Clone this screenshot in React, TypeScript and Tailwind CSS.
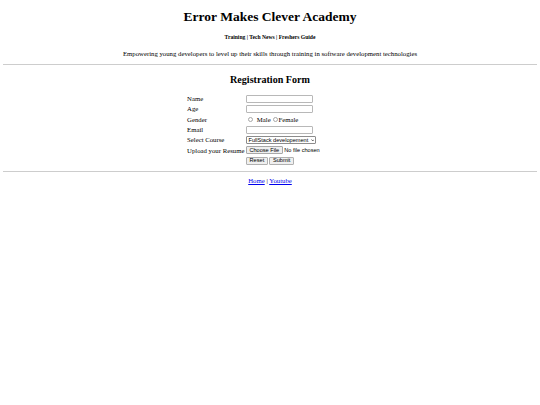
import { useState } from "react";

const serif = "font-['Liberation_Serif','Times_New_Roman',serif]";
const sans = "font-['Liberation_Sans',Arial,sans-serif]";

function Row({ label, children }: { label: string; children: React.ReactNode }) {
  return (
    <>
      <div className="flex h-[10.3px] items-center whitespace-nowrap">{label}</div>
      <div className="flex h-[10.3px] items-center">{children}</div>
    </>
  );
}

export default function App() {
  const [gender, setGender] = useState("");

  return (
    <div className={`min-h-[405px] bg-white px-[3.4px] text-black ${serif}`}>
      <h1 className="pt-[9px] text-center text-[13.5px] font-bold leading-[15.5px]">
        Error Makes Clever Academy
      </h1>
      <h5 className="mt-[9.4px] text-center text-[5.6px] font-bold leading-[6.4px]">
        Training | Tech News | Freshers Guide
      </h5>
      <p className="mt-[9.4px] text-center text-[6.75px] leading-[7.8px]">
        Empowering young developers to level up their skills through training in software development technologies
      </p>
      <hr className="mt-[6.75px] h-px border-0 bg-[#cdcdcd]" />

      <h2 className="mt-[8.4px] text-center text-[10.1px] font-bold leading-[11.6px]">
        Registration Form
      </h2>

      <form
        className="mx-auto mt-[8.6px] grid w-fit grid-cols-[auto_auto] gap-x-[1.6px] text-[6.75px] leading-[7.8px]"
        onSubmit={(e) => e.preventDefault()}
      >
        <Row label="Name">
          <input type="text" className="h-[8.4px] w-[67px] rounded-[1px] border border-[#b8b8b8] bg-white" />
        </Row>
        <Row label="Age">
          <input type="text" className="h-[8.4px] w-[67px] rounded-[1px] border border-[#b8b8b8] bg-white" />
        </Row>
        <Row label="Gender">
          <label className="flex items-center">
            <input
              type="radio"
              name="gender"
              checked={gender === "male"}
              onChange={() => setGender("male")}
              className="ml-[2px] mr-[3.6px] h-[5.2px] w-[5.2px] appearance-none rounded-full border border-[#a8a8a8] bg-white checked:bg-[#1a73e8]"
            />
            Male
          </label>
          <label className="ml-[2px] flex items-center">
            <input
              type="radio"
              name="gender"
              checked={gender === "female"}
              onChange={() => setGender("female")}
              className="mr-[0.6px] h-[5.2px] w-[5.2px] appearance-none rounded-full border border-[#a8a8a8] bg-white checked:bg-[#1a73e8]"
            />
            Female
          </label>
        </Row>
        <Row label="Email">
          <input type="email" className="h-[8.4px] w-[67px] rounded-[1px] border border-[#b8b8b8] bg-white" />
        </Row>
        <Row label="Select Course">
          <div className="relative">
            <select
              className={`h-[8px] w-[70px] appearance-none rounded-[1px] border border-[#8c8c8c] bg-white pl-[1.5px] text-[5.6px] leading-[6px] ${sans}`}
            >
              <option>FullStack developement</option>
              <option>Frontend development</option>
              <option>Backend development</option>
            </select>
            <svg
              viewBox="0 0 10 6"
              className="pointer-events-none absolute right-[1.6px] top-[2.9px] h-[2.4px] w-[3.6px]"
            >
              <path d="M1 1l4 4 4-4" fill="none" stroke="#111" strokeWidth="1.8" />
            </svg>
          </div>
        </Row>
        <Row label="Upload your Resume">
          <input
            type="file"
            className={`w-[107px] text-[5.6px] leading-[6px] ${sans} file:mr-[1.6px] file:h-[8px] file:rounded-[1px] file:border file:border-[#a8a8a8] file:bg-[#efefef] file:px-[2.4px] file:text-[5.6px] file:text-black`}
          />
        </Row>
        <Row label="">
          <button
            type="reset"
            className={`h-[7.8px] rounded-[1px] border border-[#b0b0b0] bg-[#efefef] px-[2.6px] text-[5.6px] leading-[5.6px] text-black ${sans}`}
          >
            Reset
          </button>
          <button
            type="submit"
            className={`ml-[1.6px] h-[7.8px] rounded-[1px] border border-[#b0b0b0] bg-[#efefef] px-[2.6px] text-[5.6px] leading-[5.6px] text-black ${sans}`}
          >
            Submit
          </button>
        </Row>
      </form>

      <hr className="mt-[5px] h-px border-0 bg-[#cdcdcd]" />
      <p className="mt-[5.6px] text-center text-[6.75px] leading-[7.8px]">
        <a href="#" className="text-[#0000ee] underline">
          Home
        </a>{" "}
        |{" "}
        <a href="#" className="text-[#0000ee] underline">
          Youtube
        </a>
      </p>
    </div>
  );
}
